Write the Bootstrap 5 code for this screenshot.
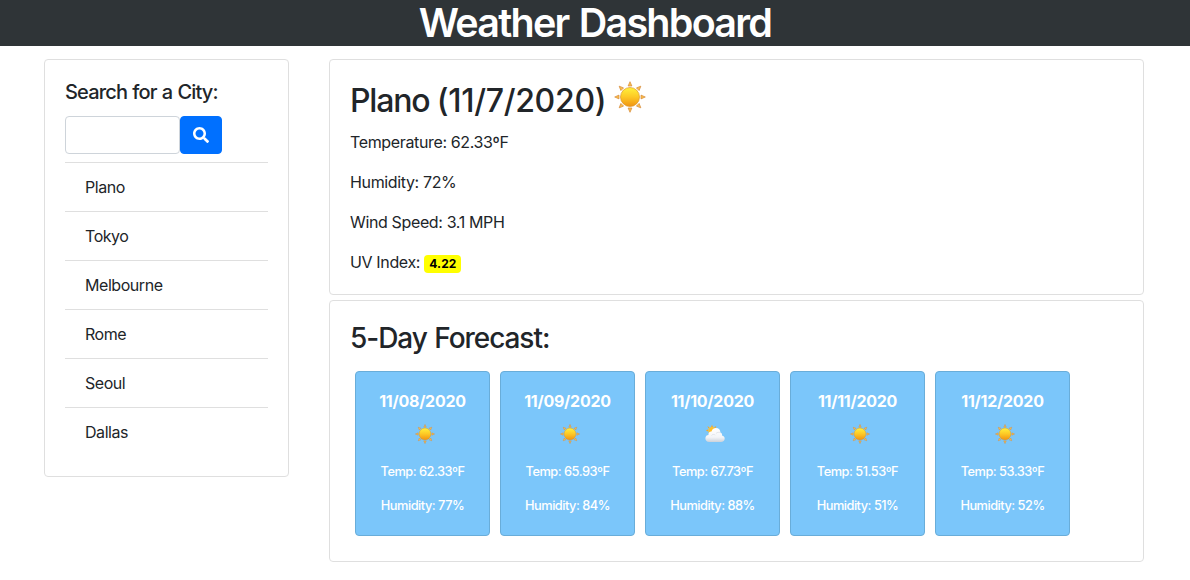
<!DOCTYPE html>
<html lang="en">
<head>
<meta charset="utf-8">
<meta name="viewport" content="width=device-width, initial-scale=1">
<title>Weather Dashboard</title>
<link href="https://cdn.jsdelivr.net/npm/bootstrap@5.3.0/dist/css/bootstrap.min.css" rel="stylesheet">
<style>
  body { font-family: Inter, "Liberation Sans", sans-serif; color: #212529; line-height: 24px; }
  .site-head { background: #2f3437; height: 46px; }
  .site-head h1 { font-size: 39.500px; line-height: 46px; font-weight: 560; letter-spacing: -1.75px; word-spacing: 2px; }
  .page { padding: 13px 46px 0 44px; gap: 40px; }
  .side { width: 245px; height: 418px; }
  .page .card { border-color: #dfdfdf; border-radius: 4px; }
  .page .card-body { padding: 20px; }
  .side h5 { font-size: 20px; line-height: 24px; font-weight: 550; letter-spacing: -.83px; word-spacing: .6px; }
  .side .form-control { width: 115px; height: 38px; border-color: #ced4da; border-radius: 4px; }
  .side .btn { width: 42px; height: 38px; background: #0070ff; border-color: #0070ff; border-radius: 4px; }
  .cities li { height: 49px; border-top: 1px solid #dfdfdf; padding: 12px 20px; letter-spacing: -.45px; }
  .today { height: 236px; margin-bottom: 5px; }
  .today h2 { font-size: 32px; line-height: 42px; font-weight: 550; letter-spacing: -.3px; }
  .today h2 .place { letter-spacing: -1.2px; }
  .today h2 svg { margin-top: 1px; }
  .today p { letter-spacing: -.36px; }
  .page .uv { background: #ff0; color: #000; font-size: 12px; padding: 3px 5px; letter-spacing: .1px; border-radius: 4px; }
  .outlook { height: 262px; }
  .outlook h3 { font-size: 28px; line-height: 34px; font-weight: 550; letter-spacing: -1.05px; word-spacing: 1px; }
  .days { gap: 10px; padding-left: 5px; }
  .days .day { width: 135px; height: 165px; background: #7bc6fa; border-color: #69add9; color: #fff; }
  .page .day .card-body { padding: 19px 0; }
  .day b { line-height: 20px; letter-spacing: -.25px; }
  .day svg { display: block; margin: 13px auto 19px 59px; }
  .day p { font-size: 12.800px; line-height: 18px; font-weight: 500; letter-spacing: -.5px; }
</style>
</head>
<body>
<svg width="0" height="0" class="position-absolute" aria-hidden="true">
  <defs>
    <linearGradient id="disc" x1="0" y1="0" x2="0" y2="1">
      <stop offset="0" stop-color="#fff23c"/><stop offset=".5" stop-color="#fdc825"/><stop offset="1" stop-color="#f09312"/>
    </linearGradient>
    <linearGradient id="puff" x1="0" y1="0" x2="0" y2="1">
      <stop offset="0" stop-color="#fff"/><stop offset=".65" stop-color="#f3f5f8"/><stop offset="1" stop-color="#ccd2da"/>
    </linearGradient>
    <symbol id="sun" viewBox="0 0 32 32">
      <g fill="#fbc04a" stroke="#d58a3c" stroke-width=".7">
        <path id="ray" d="M16 .7 17.900 5H14.100Z"/>
        <use href="#ray" transform="rotate(45 16 16)"/><use href="#ray" transform="rotate(90 16 16)"/>
        <use href="#ray" transform="rotate(135 16 16)"/><use href="#ray" transform="rotate(180 16 16)"/>
        <use href="#ray" transform="rotate(225 16 16)"/><use href="#ray" transform="rotate(270 16 16)"/>
        <use href="#ray" transform="rotate(315 16 16)"/>
      </g>
      <circle cx="16" cy="16" r="9.5" fill="url(#disc)" stroke="#dd982a" stroke-width=".7"/>
    </symbol>
    <symbol id="cloud" viewBox="0 0 20 20">
      <g fill="#f2a92c"><path d="M7 .8 8 3H6ZM11.300 2 10.500 4.400 9 3.300ZM2.400 2.200 4.600 3.300 3.400 4.600ZM.8 6.300 3 5.500V7.400Z"/></g>
      <circle cx="7" cy="6.700" r="3.700" fill="#ffc02c"/>
      <path fill="url(#puff)" d="M4.400 18C1.500 18 .4 16.200.4 14.300.4 12.200 1.900 11 3.500 11 3 8.700 4.700 7.200 6.500 7.400 7.300 5 9 4.100 10.900 4.100 13.700 4.100 15.500 6 15.400 8.500 16.900 9 17.300 10.200 17 11.400 18.900 11.700 19.700 13.100 19.700 14.600 19.700 16.600 18.100 18 15.900 18Z"/>
      <path fill="none" stroke="#d3d8df" stroke-width=".6" d="M6.500 11.500C7.500 10 9.500 10.400 10.300 11M11 9.500C12 8.200 14 8 15.300 8.600"/>
    </symbol>
  </defs>
</svg>

<header class="site-head text-center text-white"><h1 class="m-0">Weather Dashboard</h1></header>

<main class="page d-flex align-items-start">
  <aside class="card side">
    <div class="card-body">
      <h5 class="mb-2 pb-1">Search for a City:</h5>
      <form class="d-flex mb-2">
        <input class="form-control" type="text" aria-label="City">
        <button class="btn btn-primary p-0 d-flex align-items-center justify-content-center" type="button" aria-label="Search">
          <svg width="16" height="16" viewBox="0 0 512 512" fill="#fff"><path d="M505 442.700 405.300 343c-4.500-4.500-10.600-7-17-7H372c27.600-35.300 44-79.700 44-128C416 93.100 322.900 0 208 0S0 93.100 0 208s93.100 208 208 208c48.300 0 92.700-16.400 128-44v16.300c0 6.400 2.500 12.500 7 17l99.700 99.700c9.400 9.400 24.600 9.400 33.900 0l28.300-28.300c9.400-9.400 9.400-24.600.1-34zM208 336c-70.700 0-128-57.200-128-128 0-70.700 57.200-128 128-128 70.700 0 128 57.200 128 128 0 70.700-57.200 128-128 128z"/></svg>
        </button>
      </form>
      <ul class="cities list-unstyled mb-0">
        <li>Plano</li><li>Tokyo</li><li>Melbourne</li><li>Rome</li><li>Seoul</li><li>Dallas</li>
      </ul>
    </div>
  </aside>

  <div class="flex-grow-1">
    <section class="card today">
      <div class="card-body">
        <h2 class="d-flex mb-2 mt-0"><span><span class="place">Plano </span>(11/7/2020)</span><svg class="ms-2" width="32" height="32"><use href="#sun"/></svg></h2>
        <p>Temperature: 62.33ºF</p>
        <p>Humidity: 72%</p>
        <p>Wind Speed: 3.1 MPH</p>
        <p>UV Index: <span class="badge uv">4.22</span></p>
      </div>
    </section>
    <section class="card outlook">
      <div class="card-body">
        <h3 class="mb-3">5-Day Forecast:</h3>
        <div class="days d-flex">
          <div class="card day"><div class="card-body text-center"><b class="d-block">11/08/2020</b><svg width="20" height="20"><use href="#sun"/></svg><p>Temp: 62.33ºF</p><p>Humidity: 77%</p></div></div>
          <div class="card day"><div class="card-body text-center"><b class="d-block">11/09/2020</b><svg width="20" height="20"><use href="#sun"/></svg><p>Temp: 65.93ºF</p><p>Humidity: 84%</p></div></div>
          <div class="card day"><div class="card-body text-center"><b class="d-block">11/10/2020</b><svg width="20" height="20"><use href="#cloud"/></svg><p>Temp: 67.73ºF</p><p>Humidity: 88%</p></div></div>
          <div class="card day"><div class="card-body text-center"><b class="d-block">11/11/2020</b><svg width="20" height="20"><use href="#sun"/></svg><p>Temp: 51.53ºF</p><p>Humidity: 51%</p></div></div>
          <div class="card day"><div class="card-body text-center"><b class="d-block">11/12/2020</b><svg width="20" height="20"><use href="#sun"/></svg><p>Temp: 53.33ºF</p><p>Humidity: 52%</p></div></div>
        </div>
      </div>
    </section>
  </div>
</main>
<script src="https://cdn.jsdelivr.net/npm/bootstrap@5.3.0/dist/js/bootstrap.bundle.min.js"></script>
</body>
</html>
